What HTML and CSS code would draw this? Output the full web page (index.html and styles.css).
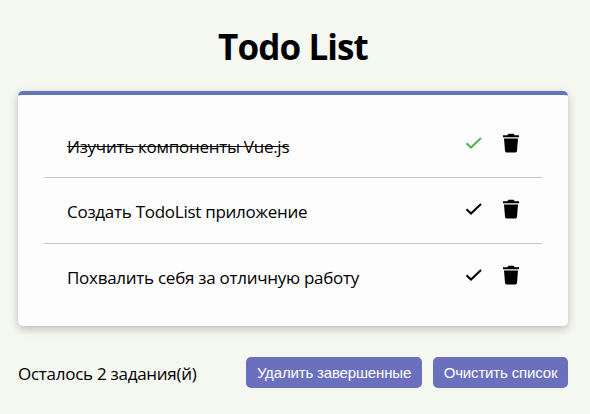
FILE: index.html
```html
<!DOCTYPE html>
<html lang="ru">
<head>
<meta charset="utf-8">
<title>Todo List</title>
<link rel="stylesheet" href="styles.css">
</head>
<body>
<svg class="sprite" aria-hidden="true">
  <symbol id="check" viewBox="0 0 18 14"><path d="M1.5 7.2 L6 11.5 L16 2" fill="none" stroke="currentColor" stroke-width="2"/></symbol>
  <symbol id="trash" viewBox="0 0 18 20"><path d="M1 2.2h4.2L6.5 .7h5L12.800 2.200H17v2H1zM2 5.500h14L15 17.700q-.1 1.800-1.600 1.800H4.600Q3.100 19.500 3 17.700z" fill="currentColor"/></symbol>
</svg>
<main class="app">
  <h1 class="title">Todo List</h1>
  <ul class="list">
    <li class="item done"><span class="text">Изучить компоненты Vue.js</span><svg class="check"><use href="#check"/></svg><svg class="trash"><use href="#trash"/></svg></li>
    <li class="item"><span class="text">Создать TodoList приложение</span><svg class="check"><use href="#check"/></svg><svg class="trash"><use href="#trash"/></svg></li>
    <li class="item"><span class="text">Похвалить себя за отличную работу</span><svg class="check"><use href="#check"/></svg><svg class="trash"><use href="#trash"/></svg></li>
  </ul>
  <footer class="footer">
    <span class="count">Осталось 2 задания(й)</span>
    <button class="btn remove">Удалить завершенные</button>
    <button class="btn clear">Очистить список</button>
  </footer>
</main>
</body>
</html>
```

FILE: styles.css
```css
* { box-sizing: border-box; }
body { margin: 0; background: #f5f7f1; color: #000; font: 17px/24px "Segoe UI", "Open Sans", sans-serif; letter-spacing: -.27px; }
.sprite { display: none; }
.app { padding: 0 22px 0 18px; }
.title { margin: 0; padding-top: 23px; height: 91px; text-align: center; font-size: 35px; line-height: 48px; font-weight: 700; letter-spacing: -.9px; }
.list { list-style: none; margin: 0; height: 235px; padding: 17px 26px 0; background: #fdfdfe; border-top: 4px solid #6474bc; border-radius: 5px; box-shadow: 0 3px 8px rgba(0, 0, 0, .24); }
.item { display: flex; height: 66px; padding: 22px 22px 0 23px; border-bottom: 1px solid #c5c5cb; }
.item:last-child { border-bottom: 0; }
.text { margin-right: auto; white-space: nowrap; }
.done .text { text-decoration: line-through; padding-top: 1px; }
.check { width: 18px; height: 14px; margin: 2px 19px 0 0; }
.done .check { color: #4bb750; }
.trash { width: 18px; height: 20px; margin-top: -1px; }
.item { padding-right: 22px; }
.footer { display: flex; padding-top: 31px; }
.count { margin-right: auto; padding-top: 5px; white-space: nowrap; }
.btn { height: 31px; padding: 0; border: 0; border-radius: 5px; background: #6a70be; color: #fff; font: 15px "Liberation Sans", sans-serif; letter-spacing: -.16px; white-space: nowrap; }
.remove { width: 176px; margin-right: 11px; }
.clear { width: 135px; }
```
